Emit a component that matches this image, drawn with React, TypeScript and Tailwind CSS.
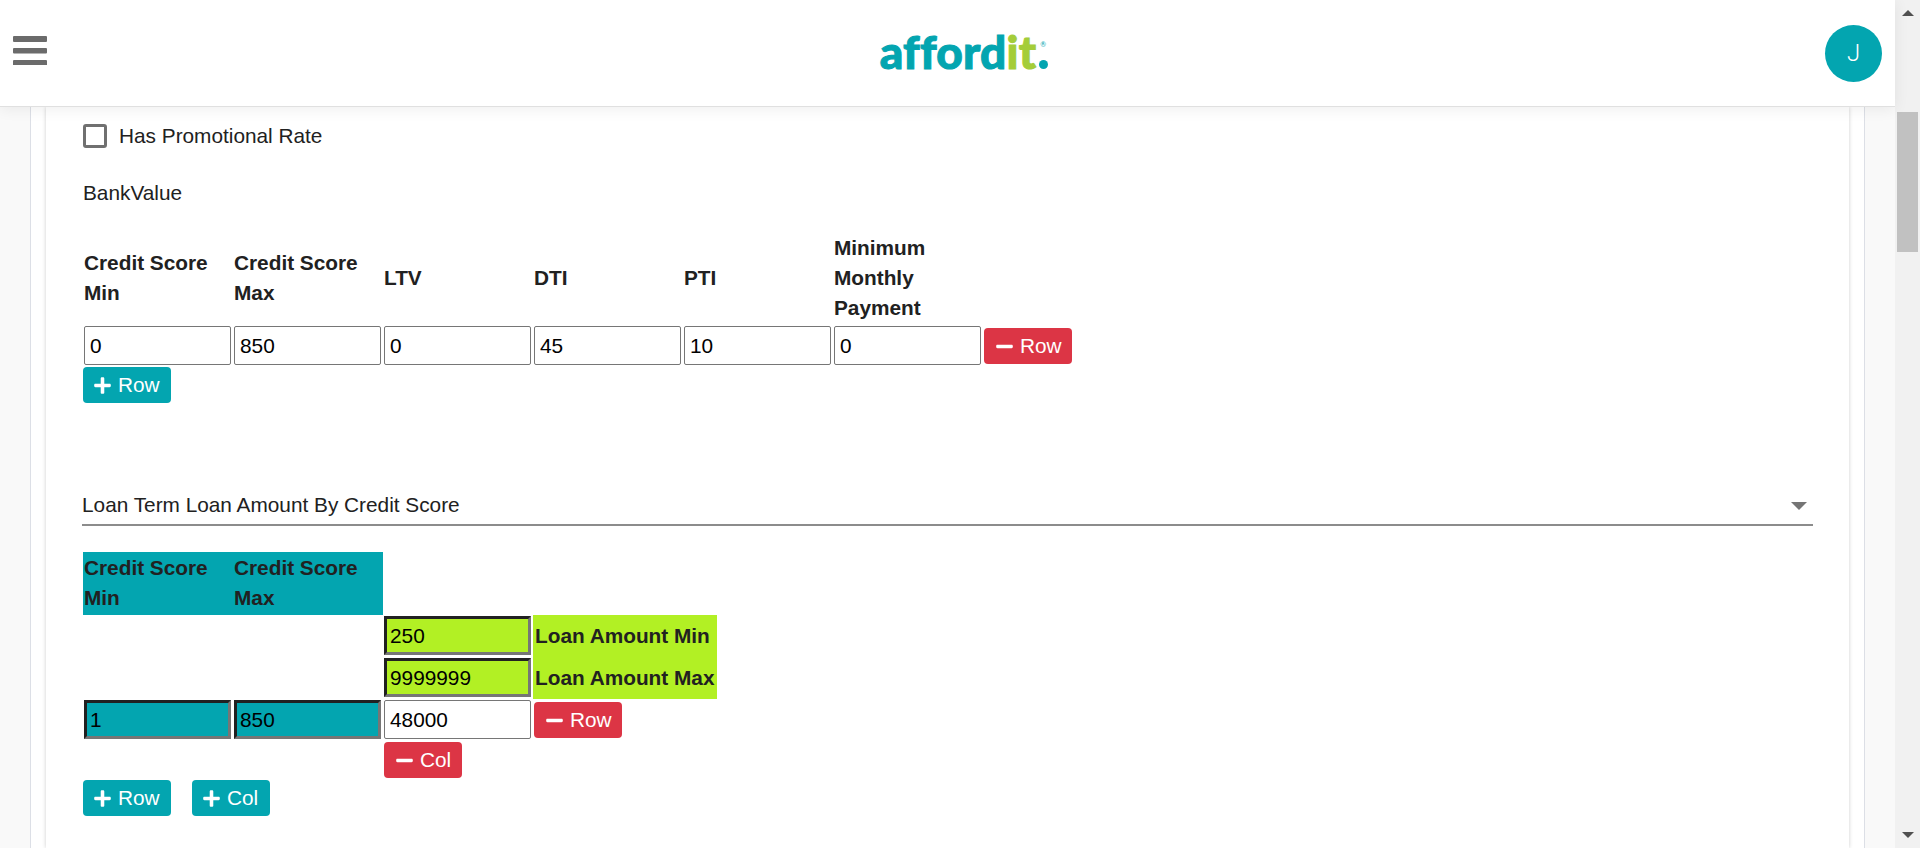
import { FaPlus, FaMinus } from "react-icons/fa";

const inputBase =
  "block w-[147px] h-[39px] text-[20.8px] text-black outline-none";
const plainInput = `${inputBase} px-[5px] bg-white border border-[#767676] rounded-[2px]`;
const tealInput = `${inputBase} px-[3px] bg-[#03a5b0] border-[3px] border-t-[#212121] border-l-[#212121] border-r-[#767676] border-b-[#767676]`;
const limeInput = `${inputBase} px-[3px] bg-[#b2f024] border-[3px] border-t-[#212121] border-l-[#212121] border-r-[#767676] border-b-[#767676]`;

function AddButton({ label, className = "" }: { label: string; className?: string }) {
  return (
    <button className={`flex items-center h-[36px] pl-[10px] gap-[6px] rounded-[4px] bg-[#03a5b0] text-white text-[20.8px] ${className}`}>
      <FaPlus className="w-[19px] h-[19px]" />
      {label}
    </button>
  );
}

function RemoveButton({ label, className = "" }: { label: string; className?: string }) {
  return (
    <button className={`flex items-center h-[36px] pl-[11px] gap-[6px] rounded-[4px] bg-[#dc3545] text-white text-[20.8px] ${className}`}>
      <FaMinus className="w-[19px] h-[19px]" />
      {label}
    </button>
  );
}

const headers = ["Credit Score Min", "Credit Score Max", "LTV", "DTI", "PTI", "Minimum Monthly Payment"];
const values = ["0", "850", "0", "45", "10", "0"];

export default function App() {
  return (
    <div className="flex h-screen overflow-hidden bg-[#f9f9f9] text-[#212121] font-['Liberation_Sans',Arial,sans-serif]">
      <div className="flex flex-col flex-1 min-w-0">
        {/* Top bar */}
        <header className="relative z-10 flex items-center justify-between h-[107px] shrink-0 bg-white border-b border-[#e0e0e0] shadow-[0_2px_14px_rgba(0,0,0,0.07)] pl-[13px] pr-[13px]">
          <svg width="34" height="29" viewBox="0 0 34 29" className="fill-[#6b6b6b] -mt-[1px] mb-[5px]">
            <rect x="0" y="0" width="34" height="6" rx="1" />
            <rect x="0" y="12" width="34" height="5.5" rx="1" />
            <rect x="0" y="24" width="34" height="5.5" rx="1" />
          </svg>
          <div className="relative flex items-baseline font-['Lato',sans-serif] font-black text-[46px] leading-none tracking-[0.2px] text-[#03a5b0] [-webkit-text-stroke:1px_currentColor] -mt-[3px] ml-[56px]">
            afford<span className="text-[#a4cd39]">it</span>
            <span className="ml-[3px] w-[9px] h-[9px] rounded-full bg-[#03a5b0]" />
            <span className="absolute right-[2px] top-[12px] text-[7px] font-normal leading-none [-webkit-text-stroke:0]">®</span>
          </div>
          <div className="flex items-center justify-center w-[57px] h-[57px] rounded-full bg-[#03a5b0] text-white text-[24px] font-light font-['Roboto',sans-serif]">
            J
          </div>
        </header>

        {/* Page column */}
        <div className="flex-1 min-h-0 mx-[30px] px-[15px] bg-white border-x border-[#dcdfe6]">
          <div className="h-full pt-[17px] pl-[37px] pr-[36px] bg-white shadow-[0_0_4px_rgba(0,0,0,0.2)]">
            <label className="flex items-center gap-[12px] h-[24px] text-[20.8px]">
              <span className="w-[24px] h-[24px] rounded-[3px] border-[3px] border-[#707070]" />
              Has Promotional Rate
            </label>
            <p className="mt-[30px] text-[20.8px] leading-[30px]">BankValue</p>

            <table className="mt-[24px] table-fixed border-separate border-spacing-0 w-[990px] text-[20.8px] leading-[30px]">
              <thead>
                <tr>
                  {headers.map((h) => (
                    <th key={h} className="w-[150px] pt-px pb-[2px] pl-px pr-[3px] text-left font-bold align-middle">
                      {h}
                    </th>
                  ))}
                  <th className="w-[90px]" />
                </tr>
              </thead>
              <tbody>
                <tr>
                  {values.map((v, i) => (
                    <td key={i} className="pt-px pb-[2px] pl-px pr-[2px]">
                      <input className={plainInput} defaultValue={v} />
                    </td>
                  ))}
                  <td className="pl-px align-middle">
                    <RemoveButton label="Row" className="w-[88px]" />
                  </td>
                </tr>
              </tbody>
            </table>
            <AddButton label="Row" className="w-[88px]" />

            {/* Select */}
            <div className="flex items-center justify-between h-[36px] mt-[87px] -ml-[1px] pr-[6px] border-b-2 border-[#8c8c8c] text-[20.8px]">
              <span className="-mt-[4px]">Loan Term Loan Amount By Credit Score</span>
              <span className="w-0 h-0 -mt-[3px] border-x-[8px] border-x-transparent border-t-[8px] border-t-[#757575]" />
            </div>

            <table className="mt-[26px] table-fixed border-separate border-spacing-0 w-[634px] text-[20.8px] leading-[30px]">
              <thead>
                <tr>
                  <th className="w-[150px] pt-px pb-[2px] pl-px pr-[3px] text-left font-bold bg-[#03a5b0]">Credit Score Min</th>
                  <th className="w-[150px] pt-px pb-[2px] pl-px pr-[3px] text-left font-bold bg-[#03a5b0]">Credit Score Max</th>
                  <th className="w-[150px]" />
                  <th className="w-[184px]" />
                </tr>
              </thead>
              <tbody>
                <tr>
                  <td />
                  <td />
                  <td className="pt-px pb-[2px] pl-px pr-[2px]">
                    <input className={limeInput} defaultValue="250" />
                  </td>
                  <td className="pl-[2px] bg-[#b2f024] font-bold whitespace-nowrap">Loan Amount Min</td>
                </tr>
                <tr>
                  <td />
                  <td />
                  <td className="pt-px pb-[2px] pl-px pr-[2px]">
                    <input className={limeInput} defaultValue="9999999" />
                  </td>
                  <td className="pl-[2px] bg-[#b2f024] font-bold whitespace-nowrap">Loan Amount Max</td>
                </tr>
                <tr>
                  <td className="pt-px pb-[2px] pl-px pr-[2px]">
                    <input className={tealInput} defaultValue="1" />
                  </td>
                  <td className="pt-px pb-[2px] pl-px pr-[2px]">
                    <input className={tealInput} defaultValue="850" />
                  </td>
                  <td className="pt-px pb-[2px] pl-px pr-[2px]">
                    <input className={plainInput} defaultValue="48000" />
                  </td>
                  <td className="pl-px align-middle">
                    <RemoveButton label="Row" className="w-[88px]" />
                  </td>
                </tr>
                <tr>
                  <td />
                  <td />
                  <td className="pt-px pb-[2px] pl-px">
                    <RemoveButton label="Col" className="w-[78px]" />
                  </td>
                  <td />
                </tr>
              </tbody>
            </table>
            <div className="flex gap-[21px]">
              <AddButton label="Row" className="w-[88px]" />
              <AddButton label="Col" className="w-[78px]" />
            </div>
          </div>
        </div>
      </div>

      {/* Scrollbar */}
      <div className="flex flex-col items-center w-[25px] shrink-0 bg-[#f1f1f1]">
        <span className="mt-[10px] w-0 h-0 border-x-[6px] border-x-transparent border-b-[6px] border-b-[#505050]" />
        <div className="mt-[96px] w-[21px] h-[140px] bg-[#c1c1c1]" />
        <span className="mt-auto mb-[10px] w-0 h-0 border-x-[6px] border-x-transparent border-t-[6px] border-t-[#505050]" />
      </div>
    </div>
  );
}
